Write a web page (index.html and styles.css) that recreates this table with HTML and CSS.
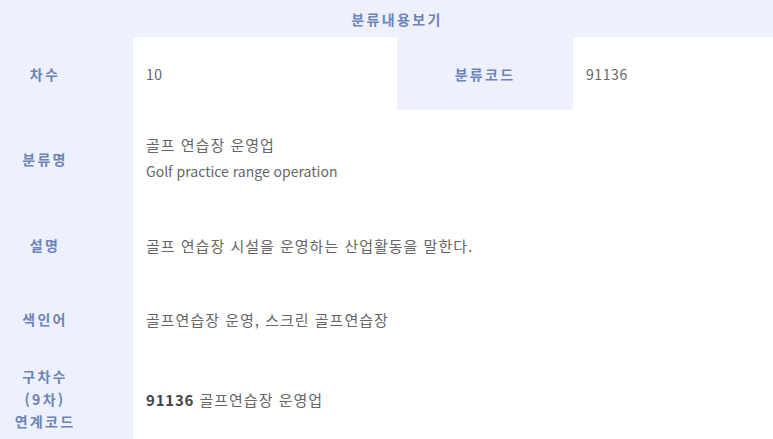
FILE: index.html
```html
<!DOCTYPE html>
<html lang="ko">
<head>
<meta charset="utf-8">
<title>분류내용보기</title>
<link rel="stylesheet" href="styles.css">
</head>
<body>
<table class="view">
  <colgroup>
    <col class="c-label1">
    <col class="c-val1">
    <col class="c-label2">
    <col class="c-val2">
  </colgroup>
  <thead>
    <tr class="r-head"><th colspan="4" class="head">분류내용보기</th></tr>
  </thead>
  <tbody>
    <tr class="r1">
      <th class="lbl">차수</th>
      <td class="val num">10</td>
      <th class="lbl">분류코드</th>
      <td class="val num">91136</td>
    </tr>
    <tr class="r2">
      <th class="lbl">분류명</th>
      <td class="val two" colspan="3"><div class="ko">골프 연습장 운영업</div><div class="en">Golf practice range operation</div></td>
    </tr>
    <tr class="r3">
      <th class="lbl">설명</th>
      <td class="val" colspan="3">골프 연습장 시설을 운영하는 산업활동을 말한다.</td>
    </tr>
    <tr class="r4">
      <th class="lbl">색인어</th>
      <td class="val" colspan="3">골프연습장 운영, 스크린 골프연습장</td>
    </tr>
    <tr class="r5">
      <th class="lbl multi">구차수<br>(9차)<br>연계코드</th>
      <td class="val" colspan="3"><b class="code">91136</b> 골프연습장 운영업</td>
    </tr>
  </tbody>
</table>
</body>
</html>
```
FILE: styles.css
```css
html, body {
  margin: 0;
  padding: 0;
  background: #ffffff;
  overflow: hidden;
}
body {
  font-family: "Noto Sans CJK KR", "Noto Sans", sans-serif;
  font-size: 14px;
  color: #666666;
}
.view {
  width: 880px;
  margin-left: -43px;
  border-collapse: collapse;
  table-layout: fixed;
}
.c-label1 { width: 176px; }
.c-val1 { width: 264px; }
.c-label2 { width: 176px; }
.c-val2 { width: 264px; }

.view th, .view td {
  padding: 0;
  vertical-align: middle;
}
.head {
  height: 37px;
  background: #eef0fb;
  color: #6c84b9;
  font-weight: bold;
  font-size: 14px;
  letter-spacing: 2.4px;
  text-align: center;
}
.lbl {
  background: #eef0fb;
  color: #6c84b9;
  font-weight: bold;
  font-size: 14px;
  letter-spacing: 2.3px;
  text-align: center;
}
.val {
  background: #ffffff;
  padding-left: 13px !important;
  font-size: 15px;
  letter-spacing: 1px;
  text-align: left;
}
.val.num {
  font-size: 14px;
  letter-spacing: 0.6px;
}
.r1 { height: 73px; }
.r2 { height: 98px; }
.r3 { height: 74px; }
.r4 { height: 74px; }
.r5 { height: 86px; }

.two { padding-bottom: 3px !important; }
.two .ko { line-height: 26px; }
.two .en { line-height: 26px; font-size: 14px; letter-spacing: 0; }
.multi { line-height: 22.5px; }
.code {
  color: #444444;
  font-weight: bold;
  font-size: 15px;
  letter-spacing: 0.8px;
}
```
